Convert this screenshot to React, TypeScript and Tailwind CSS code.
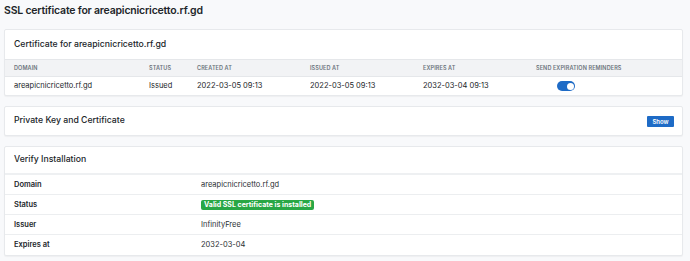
import React from "react";

const cols = [
  { label: "Domain", w: "w-[135px]" },
  { label: "Status", w: "w-[48px]" },
  { label: "Created at", w: "w-[113px]" },
  { label: "Issued at", w: "w-[113px]" },
  { label: "Expires at", w: "w-[113px]" },
  { label: "Send expiration reminders", w: "w-[140px]" },
];

function Toggle() {
  return (
    <div className="w-[18px] h-[10px] rounded-full bg-[#1e6bc6] flex items-center justify-end pr-[1.5px]">
      <div className="w-[7px] h-[7px] rounded-full bg-white" />
    </div>
  );
}

export default function App() {
  return (
    <div
      className="w-[690px] h-[261px] bg-[#f8f9fb] text-[#212529] overflow-hidden"
      style={{ fontFamily: "Inter, 'Noto Sans', sans-serif" }}
    >
      <div className="h-[21px] pl-[4px] flex items-center text-[10.5px] font-semibold tracking-[-0.2px]">
        SSL certificate for areapicnicricetto.rf.gd
      </div>
      <div className="ml-[4px] w-[679px] mt-[8px] flex flex-col gap-[10px]">
        {/* Card 1 */}
        <div className="bg-white border border-[#e7e9ec] rounded-[2px] shadow-[0_1px_1px_rgba(0,0,0,0.04)]">
          <div className="h-[29px] flex items-center pl-[9px] text-[8.7px] font-medium">
            Certificate for areapicnicricetto.rf.gd
          </div>
          <div className="h-[18px] bg-[#f2f3f5] border-y border-[#e5e7ea] flex items-center pl-[9px] text-[5.5px] font-semibold uppercase text-[#6c737c] tracking-[0.1px]">
            {cols.map((c) => (
              <div key={c.label} className={c.w}>
                {c.label}
              </div>
            ))}
          </div>
          <div className="h-[18px] flex items-center pl-[9px] text-[7.5px]">
            <div className="w-[135px]">areapicnicricetto.rf.gd</div>
            <div className="w-[48px]">Issued</div>
            <div className="w-[113px]">2022-03-05 09:13</div>
            <div className="w-[113px]">2022-03-05 09:13</div>
            <div className="w-[113px]">2032-03-04 09:13</div>
            <div className="w-[140px] pl-[21px]">
              <Toggle />
            </div>
          </div>
        </div>

        {/* Card 2 */}
        <div className="h-[30px] bg-white border border-[#e7e9ec] rounded-[2px] shadow-[0_1px_1px_rgba(0,0,0,0.04)] flex items-center justify-between pl-[9px] pr-[8px]">
          <div className="text-[8.7px] font-medium">Private Key and Certificate</div>
          <button className="h-[11px] w-[27px] bg-[#1e6bc6] text-white text-[6px] font-semibold flex items-center justify-center rounded-[1px]">
            Show
          </button>
        </div>

        {/* Card 3 */}
        <div className="bg-white border border-[#e7e9ec] rounded-[2px] shadow-[0_1px_1px_rgba(0,0,0,0.04)]">
          <div className="h-[28px] flex items-center pl-[9px] text-[8.7px] font-medium border-b-2 border-[#eef0f2]">
            Verify Installation
          </div>
          {[
            ["Domain", <span>areapicnicricetto.rf.gd</span>],
            [
              "Status",
              <span className="bg-[#28a745] text-white text-[7px] font-bold px-[3px] h-[10px] inline-flex items-center whitespace-nowrap rounded-[2px]">
                Valid SSL certificate is installed
              </span>,
            ],
            ["Issuer", <span>InfinityFree</span>],
            ["Expires at", <span>2032-03-04</span>],
          ].map(([label, value], i) => (
            <div
              key={i}
              className={`h-[20px] flex items-center pl-[9px] text-[7.5px] ${
                i < 3 ? "border-b border-[#eceef0]" : ""
              }`}
            >
              <div className="w-[187px] font-semibold">{label as string}</div>
              <div className="text-[#2b2f33]">{value}</div>
            </div>
          ))}
        </div>
      </div>
    </div>
  );
}
